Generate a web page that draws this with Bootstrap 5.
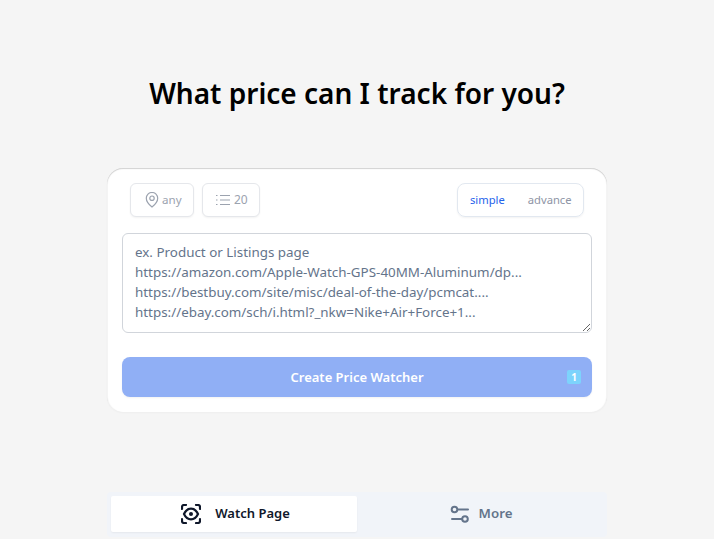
<!DOCTYPE html>
<html><head><meta charset="utf-8">
<link href="https://cdn.jsdelivr.net/npm/bootstrap@5.3.0/dist/css/bootstrap.min.css" rel="stylesheet">
<style>
html,body{height:539px;overflow:hidden}
body{background:#f5f5f5;font-family:"Noto Sans",sans-serif;width:714px}
.pg-title{font-family:"Noto Sans",sans-serif;font-size:28px;font-weight:600;line-height:40px;color:#000;margin:0;padding-top:73px;text-align:center;height:168px}
.pg-card{width:500px;height:244px;margin-left:107px;background:#fff;border-radius:16px;box-shadow:inset 0 1px 1px rgba(0,0,0,.18),inset 1px 0 1px rgba(0,0,0,.03),inset -1px 0 1px rgba(0,0,0,.03),0 1px 2px rgba(0,0,0,.03);padding:15px}
.tool-btn{height:34px;border:1px solid #e5e7eb;border-radius:6px;background:#fff;color:#9ca3af;font-size:12px;box-shadow:0 1px 2px rgba(0,0,0,.05)}
.tool-a{width:64px;padding-left:14px;gap:3px;font-size:11.6px}
.tool-b{width:58px;padding-left:13px;gap:4px}
.seg{height:34px;width:127px;border:1px solid #e2e8f0;border-radius:8px;font-size:11.2px;box-shadow:0 1px 2px rgba(0,0,0,.05);padding-left:12px;gap:23px}
.seg-on{color:#2563eb}.seg-off{color:#8e95a5}
.url-box{width:470px;height:100px;margin-top:16px;border:1px solid #d1d5db;border-radius:6px;font-size:13.4px;line-height:20px;padding:8px 12px;color:#64748b;resize:vertical}
.url-box::placeholder{color:#64748b;opacity:1}
.cta{width:470px;height:40px;margin-top:24px;padding-top:1px;background:#90aff5;border-radius:8px;color:#fff;font-size:13px;font-weight:600;position:relative;box-shadow:0 1px 2px rgba(0,0,0,.05)}
.cta-badge{position:absolute;right:11px;top:13px;width:14px;height:14px;background:#7dd3fc;color:#fff;font-size:10px;line-height:14px;text-align:center;border-radius:2px;font-weight:700}
.tabs-row{width:500px;height:45px;margin:80px 0 0 107px;background:#f1f4f9;border-radius:4px}
.tab-a{width:246px;height:36px;margin:4px 0 0 4px;padding-left:3px;background:#fff;color:#0f172a;font-size:13px;font-weight:600;gap:14px;border-radius:2px;box-shadow:0 1px 2px rgba(0,0,0,.05)}
.tab-b{flex:1;height:36px;margin-top:4px;padding-right:2px;color:#64748b;font-size:13.3px;font-weight:600;gap:9px}
</style></head><body>
<h1 class="pg-title">What price can I track for you?</h1>
<div class="pg-card">
<div class="d-flex align-items-center px-2">
<div class="tool-btn tool-a d-flex align-items-center me-2"><svg width="14" height="16" viewBox="0 0 14 16" fill="none" stroke="#9ca3af" stroke-width="1.2"><path d="M7 15s5.700-4.500 5.700-8.800A5.700 5.700 0 0 0 1.300 6.200C1.300 10.500 7 15 7 15z"/><circle cx="7" cy="6.200" r="2.200"/></svg>any</div>
<div class="tool-btn tool-b d-flex align-items-center"><svg width="14" height="12" viewBox="0 0 14 12" fill="none" stroke="#9ca3af" stroke-width="1.200"><path d="M4 1.500h10M4 6h10M4 10.500h10"/><path d="M0 1.500h1.500M0 6h1.500M0 10.500h1.500"/></svg>20</div>
<div class="seg d-flex align-items-center ms-auto"><span class="seg-on">simple</span><span class="seg-off">advance</span></div>
</div>
<textarea class="url-box d-block" placeholder="ex. Product or Listings page
https://amazon.com/Apple-Watch-GPS-40MM-Aluminum/dp...
https://bestbuy.com/site/misc/deal-of-the-day/pcmcat....
https://ebay.com/sch/i.html?_nkw=Nike+Air+Force+1..."></textarea>
<div class="cta d-flex align-items-center justify-content-center">Create Price Watcher<span class="cta-badge">1</span></div>
</div>
<div class="tabs-row d-flex">
<div class="tab-a d-flex align-items-center justify-content-center"><svg width="20" height="20" viewBox="0 0 20 20" fill="none" stroke="#0f172a" stroke-width="2.200" stroke-linecap="round"><path d="M1 5V3a2 2 0 0 1 2-2h2M15 1h2a2 2 0 0 1 2 2v2M19 15v2a2 2 0 0 1-2 2h-2M5 19H3a2 2 0 0 1-2-2v-2"/><path d="M3 10s2.500-5.300 7-5.300 7 5.300 7 5.300-2.500 5.300-7 5.300-7-5.300-7-5.300z"/><circle cx="10" cy="10" r="2" fill="#0f172a" stroke="none"/></svg>Watch Page</div>
<div class="tab-b d-flex align-items-center justify-content-center"><svg width="20" height="20" viewBox="0 0 20 20" fill="none" stroke="#64748b" stroke-width="2" stroke-linecap="round"><circle cx="4.500" cy="5.500" r="2.800"/><path d="M8 5.500h10M2 15h10"/><circle cx="15" cy="15" r="2.800"/></svg>More</div>
</div>
<script src="https://cdn.jsdelivr.net/npm/bootstrap@5.3.0/dist/js/bootstrap.bundle.min.js"></script>
</body></html>
